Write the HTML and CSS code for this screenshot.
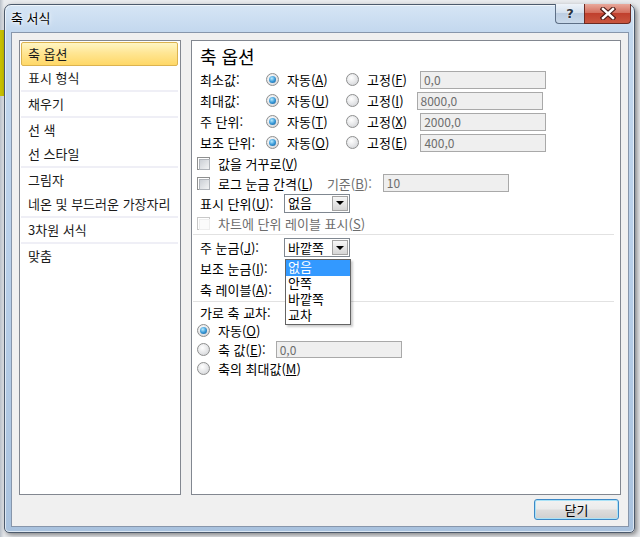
FILE: index.html
```html
<!DOCTYPE html>
<html lang="ko">
<head>
    <meta charset="UTF-8">
    <title>축 서식</title>
    <link rel="stylesheet" href="styles.css">
</head>
<body>
<div class="desktop">
    <div class="window">

        <!-- Titelleiste -->
        <div class="titlebar">
            <span class="title">축 서식</span>
            <div class="caption-buttons">
                <span class="cap-help">?</span>
                <span class="cap-close">
                    <svg width="16" height="13" viewBox="0 0 16 13">
                        <path d="M3 2 L13 11 M13 2 L3 11" stroke="#4a1a14" stroke-width="4.6" stroke-linecap="square"/>
                        <path d="M3 2 L13 11 M13 2 L3 11" stroke="#fff" stroke-width="2.4" stroke-linecap="square"/>
                    </svg>
                </span>
            </div>
        </div>

        <div class="client">
            <div class="main">

                <!-- Kategorien links -->
                <ul class="nav">
                    <li class="selected">축 옵션</li>
                    <li>표시 형식</li>
                    <li class="divider"></li>
                    <li>채우기</li>
                    <li class="divider"></li>
                    <li>선 색</li>
                    <li>선 스타일</li>
                    <li class="divider"></li>
                    <li>그림자</li>
                    <li>네온 및 부드러운 가장자리</li>
                    <li class="divider"></li>
                    <li>3차원 서식</li>
                    <li class="divider"></li>
                    <li>맞춤</li>
                </ul>

                <!-- Optionen rechts -->
                <div class="panel">
                    <h2>축 옵션</h2>

                    <div class="row tall">
                        <span class="field-label">최소값:</span>
                        <span class="choice"><span class="radio on"></span>자동(<u>A</u>)</span>
                        <span class="radio"></span>고정(<u>F</u>)
                        <span class="box">0,0</span>
                    </div>
                    <div class="row tall">
                        <span class="field-label">최대값:</span>
                        <span class="choice"><span class="radio on"></span>자동(<u>U</u>)</span>
                        <span class="radio"></span>고정(<u>I</u>)
                        <span class="box">8000,0</span>
                    </div>
                    <div class="row tall">
                        <span class="field-label">주 단위:</span>
                        <span class="choice"><span class="radio on"></span>자동(<u>T</u>)</span>
                        <span class="radio"></span>고정(<u>X</u>)
                        <span class="box">2000,0</span>
                    </div>
                    <div class="row tall">
                        <span class="field-label">보조 단위:</span>
                        <span class="choice"><span class="radio on"></span>자동(<u>O</u>)</span>
                        <span class="radio"></span>고정(<u>E</u>)
                        <span class="box">400,0</span>
                    </div>

                    <div class="row">
                        <span class="check"></span>값을 거꾸로(<u>V</u>)
                    </div>
                    <div class="row">
                        <span class="check"></span>로그 눈금 간격(<u>L</u>)
                        <span class="muted base-label">기준(<u>B</u>):</span>
                        <span class="box base-box">10</span>
                    </div>
                    <div class="row">
                        <span class="field-label wide">표시 단위(<u>U</u>):</span>
                        <span class="combo"><span class="value">없음</span><span class="arrow"></span></span>
                    </div>
                    <div class="row muted">
                        <span class="check off"></span>차트에 단위 레이블 표시(<u>S</u>)
                    </div>

                    <div class="rule"></div>

                    <div class="row tall">
                        <span class="field-label wide">주 눈금(<u>J</u>):</span>
                        <span class="combo">
                            <span class="value">바깥쪽</span><span class="arrow"></span>
                            <div class="menu">
                                <div class="active">없음</div>
                                <div>안쪽</div>
                                <div>바깥쪽</div>
                                <div>교차</div>
                            </div>
                        </span>
                    </div>
                    <div class="row tall">
                        <span class="field-label wide">보조 눈금(<u>I</u>):</span>
                    </div>
                    <div class="row tall">
                        <span class="field-label wide">축 레이블(<u>A</u>):</span>
                    </div>

                    <div class="rule"></div>

                    <div class="row caption">
                        <span class="field-label">가로 축 교차:</span>
                    </div>
                    <div class="row short">
                        <span class="radio on"></span>자동(<u>O</u>)
                    </div>
                    <div class="row short">
                        <span class="radio"></span>축 값(<u>E</u>):
                        <span class="box cross-box">0,0</span>
                    </div>
                    <div class="row short">
                        <span class="radio"></span>축의 최대값(<u>M</u>)
                    </div>
                </div>
            </div>

            <div class="footer">
                <button class="btn-default">닫기</button>
            </div>
        </div>
    </div>
</div>
</body>
</html>
```

FILE: styles.css
```css
* {
    box-sizing: border-box;
}

body {
    margin: 0;
    width: 640px;
    height: 537px;
    overflow: hidden;
    font-family: "Noto Sans CJK KR", "Noto Sans", sans-serif;
    font-size: 13px;
    color: #000;
}

/* Hintergrund (Excel hinter dem Dialog) */
.desktop {
    height: 537px;
    padding: 4px 0 0 4px;
    background:
        linear-gradient(#c8c000, #c8c000) 0 30px / 4px 66px no-repeat,
        linear-gradient(90deg, #b9c0c9 0, #e9ebee 4px) ;
}

/* Fenster */
.window {
    width: 631px;
    height: 529px;
    border: 1px solid #4c5a6c;
    border-radius: 7px 7px 5px 5px;
    background: linear-gradient(180deg, #d6e5f5 0, #c3d8ee 27px, #b9d0ea 45%, #a9c2de 100%);
    box-shadow: 2px 2px 5px rgba(0, 0, 0, 0.45), inset 0 0 0 1px rgba(255, 255, 255, 0.6);
    display: flex;
    flex-direction: column;
}

.titlebar {
    height: 27px;
    display: flex;
    align-items: flex-start;
}

.title {
    padding: 5px 0 0 6px;
    line-height: 16px;
    text-shadow: 0 0 6px #fff, 0 0 3px #fff;
}

.caption-buttons {
    margin-left: auto;
    margin-right: 3px;
    display: flex;
    margin-top: -1px;
}

.cap-help,
.cap-close {
    height: 20px;
    display: flex;
    align-items: center;
    justify-content: center;
    border: 1px solid #5d6f86;
    border-top: 0;
}

.cap-help {
    width: 29px;
    border-radius: 0 0 0 4px;
    border-right: 0;
    background: linear-gradient(180deg, #eef3f9 0, #d5e1ee 45%, #bccde1 50%, #c9d9ea 100%);
    font-family: "DejaVu Sans", sans-serif;
    font-weight: bold;
    font-size: 13px;
    color: #2b3340;
    text-shadow: 0 0 2px #fff;
}

.cap-close {
    width: 47px;
    border-radius: 0 0 4px 0;
    border-color: #6b2a22;
    background: linear-gradient(180deg, #e9a99c 0, #d4705f 45%, #c0402e 50%, #c9563f 100%);
}

/* Innenbereich */
.client {
    height: 495px;
    margin: 0 5px 5px 6px;
    border: 1px solid #8796ab;
    background: #f0f0f0;
    padding: 7px 7px 6px 7px;
    display: flex;
    flex-direction: column;
}

.main {
    height: 455px;
    display: flex;
    gap: 10px;
}

/* Kategorienliste */
.nav {
    width: 162px;
    margin: 0;
    padding: 1px 2px 1px 1px;
    list-style: none;
    border: 1px solid #828790;
    background: #fff;
}

.nav li {
    height: 24px;
    line-height: 22px;
    padding-left: 6px;
    border: 1px solid transparent;
    color: #1b1b1b;
    white-space: nowrap;
}

.nav li.selected {
    border-color: #dcb34f;
    border-radius: 2px;
    background: linear-gradient(180deg, #fff6c4 0, #ffe694 45%, #ffd867 100%);
}

.nav li.divider {
    height: 2px;
    border: 0;
    background: #efeff6;
}

/* Optionsbereich */
.panel {
    width: 430px;
    border: 1px solid #828790;
    background: #fff;
}

/* Liberation Sans zuerst, damit die Zeile nicht in die erste Optionszeile ragt */
.panel h2 {
    height: 28px;
    margin: 0;
    padding: 7px 0 0 8px;
    font-family: "Liberation Sans", "Noto Sans CJK KR", sans-serif;
    font-size: 18px;
    font-weight: normal;
    line-height: 21px;
}

.row {
    height: 20px;
    padding-left: 5px;
    display: flex;
    align-items: center;
    white-space: nowrap;
}

.row.tall {
    height: 21px;
}

.row.short {
    height: 19px;
}

.row.caption {
    height: 17px;
}

.field-label {
    width: 69px;
    padding-left: 3px;
    flex: none;
}

.field-label.wide {
    width: 87px;
}

.choice {
    width: 80px;
    display: flex;
    align-items: center;
    flex: none;
}

.muted {
    color: #6d6d6d;
}

u {
    text-underline-offset: 1px;
}

/* Optionsfelder */
.radio {
    width: 13px;
    height: 13px;
    margin-right: 8px;
    flex: none;
    border-radius: 50%;
    border: 1px solid #8e8f8f;
    background: radial-gradient(circle at 40% 35%, #ffffff 0, #e4e5e7 55%, #c9cbcf 100%);
    display: flex;
    align-items: center;
    justify-content: center;
}

.radio.on::after {
    content: "";
    width: 7px;
    height: 7px;
    border-radius: 50%;
    background: radial-gradient(circle at 40% 35%, #b9ecff 0, #3b9ad8 50%, #10558f 100%);
}

.check {
    width: 13px;
    height: 13px;
    margin-right: 8px;
    flex: none;
    padding: 1px;
    border: 1px solid #8e8f8f;
    background: #fff;
}

.check::after {
    content: "";
    display: block;
    width: 9px;
    height: 9px;
    border: 1px solid #b0b4ba;
    background: linear-gradient(135deg, #cbcfd5 0, #f3f4f5 100%);
}

.check.off {
    border-color: #c8c8c8;
}

.check.off::after {
    border-color: #eeeeee;
    background: #fbfbfb;
}

/* Eingabefelder (deaktiviert) */
.box {
    width: 126px;
    height: 18px;
    margin-left: 13px;
    padding-left: 3px;
    border: 1px solid #a9a9a9;
    background: #efefef;
    color: #6d6d6d;
    font-size: 12px;
    line-height: 16px;
    flex: none;
}

.base-label {
    margin-left: 14px;
}

.base-box {
    margin-left: 11px;
}

.cross-box {
    margin-left: 10px;
    height: 17px;
}

/* Kombinationsfeld */
.combo {
    position: relative;
    width: 66px;
    height: 19px;
    border: 1px solid #7f8790;
    background: #fff;
    display: flex;
    align-items: center;
    flex: none;
}

.combo .value {
    flex: 1;
    padding-left: 3px;
    line-height: 16px;
}

.combo .arrow {
    width: 16px;
    height: 15px;
    margin-right: 1px;
    border: 1px solid #a3a3a3;
    background: linear-gradient(180deg, #f7f7f7 0, #e6e6e6 50%, #d6d6d6 100%);
    display: flex;
    align-items: center;
    justify-content: center;
}

.combo .arrow::after {
    content: "";
    border-left: 4px solid transparent;
    border-right: 4px solid transparent;
    border-top: 4px solid #000;
}

.menu {
    position: absolute;
    top: 20px;
    left: 0;
    width: 66px;
    border: 1px solid #646464;
    background: #fff;
    box-shadow: 2px 2px 2px rgba(0, 0, 0, 0.2);
    font-family: "Liberation Sans", "Noto Sans CJK KR", sans-serif;
    z-index: 2;
}

.menu div {
    height: 16px;
    line-height: 16px;
    padding-left: 2px;
}

.menu div.active {
    background: #3399ff;
    color: #fff;
}

.rule {
    height: 1px;
    margin: 1px 6px 2px 1px;
    background: #e2e2e2;
}

/* Schaltfläche unten */
.footer {
    margin-top: 4px;
    padding-right: 2px;
    display: flex;
    justify-content: flex-end;
}

.btn-default {
    width: 85px;
    height: 21px;
    padding: 0;
    border: 1px solid #3c88c6;
    border-radius: 3px;
    background: linear-gradient(180deg, #f2f2f2 0, #ebebeb 48%, #dddddd 52%, #cfcfcf 100%);
    box-shadow: inset 0 0 0 1px #a9e2f7;
    font-family: inherit;
    font-size: 13px;
    color: #000;
}
```
